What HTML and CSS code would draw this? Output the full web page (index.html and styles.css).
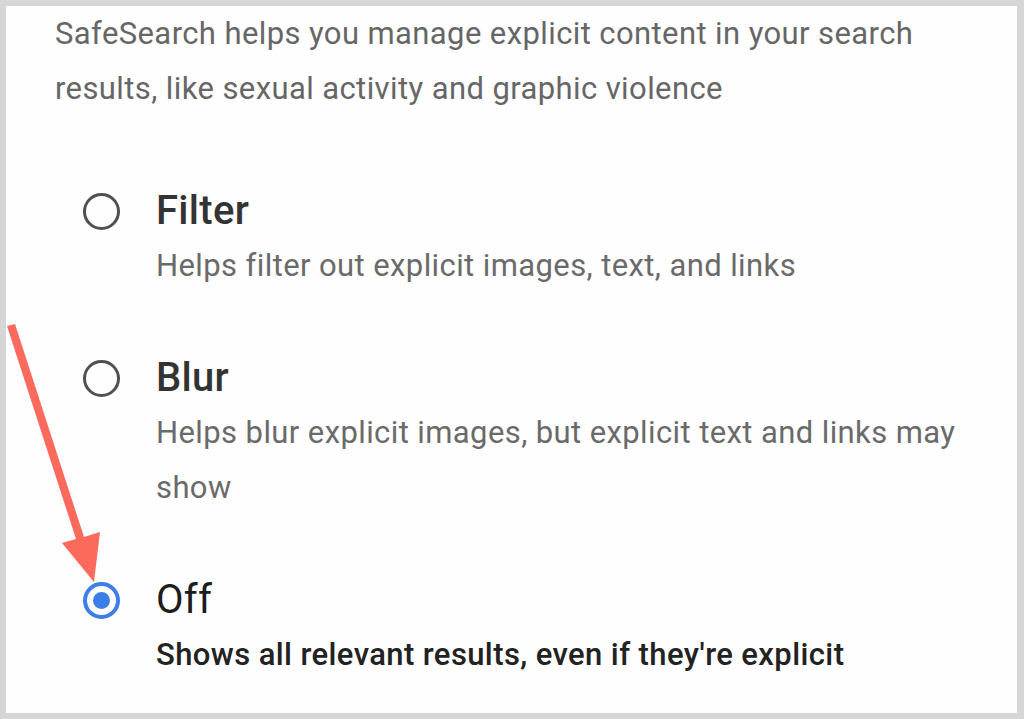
FILE: index.html
```html
<!DOCTYPE html>
<html>
<head>
<meta charset="utf-8">
<link rel="stylesheet" href="styles.css">
</head>
<body>
<div class="frame">
  <p class="intro">SafeSearch helps you manage explicit content in your search results, like sexual activity and graphic violence</p>
  <div class="options">
    <div class="option">
      <span class="radio"></span>
      <div class="text">
        <div class="title">Filter</div>
        <div class="desc">Helps filter out explicit images, text, and links</div>
      </div>
    </div>
    <div class="option">
      <span class="radio"></span>
      <div class="text">
        <div class="title">Blur</div>
        <div class="desc">Helps blur explicit images, but explicit text and links may show</div>
      </div>
    </div>
    <div class="option selected">
      <span class="radio"></span>
      <div class="text">
        <div class="title">Off</div>
        <div class="desc">Shows all relevant results, even if they're explicit</div>
      </div>
    </div>
  </div>
  <svg class="arrow" width="110" height="290" viewBox="0 0 110 290">
    <polygon points="7,26 15,24 84,237 100,232 94,282 62,243 76,239" fill="#fb6a5c"/>
  </svg>
</div>
</body>
</html>
```

FILE: styles.css
```css
html, body {
  margin: 0;
  padding: 0;
  background: #d6d6d6;
}
.frame {
  position: relative;
  box-sizing: border-box;
  width: 1024px;
  height: 719px;
  border-style: solid;
  border-color: #d6d6d6;
  border-width: 6px 7px 6px 6px;
  background: #fefefe;
  padding: 0 30px 0 49px;
  font-family: Roboto, "Noto Sans", sans-serif;
  overflow: hidden;
}
.intro {
  margin: 0;
  font-size: 31px;
  letter-spacing: 0.4px;
  line-height: 55px;
  color: #666666;
  width: 900px;
}
.options {
  margin-top: 68px;
  display: flex;
  flex-direction: column;
  gap: 58px;
}
.option {
  display: flex;
  align-items: flex-start;
}
.radio {
  box-sizing: border-box;
  width: 37px;
  height: 37px;
  border: 3px solid #505050;
  border-radius: 50%;
  margin: 9px 0 0 28px;
  flex: none;
  display: flex;
  align-items: center;
  justify-content: center;
}
.selected .radio {
  border: 4px solid #3d7fe6;
}
.selected .radio::after {
  content: "";
  width: 17px;
  height: 17px;
  border-radius: 50%;
  background: #3a7ee8;
}
.text {
  margin-left: 36px;
  width: 810px;
}
.title {
  font-size: 40px;
  letter-spacing: 0.3px;
  line-height: 54px;
  font-weight: 500;
  color: #333333;
}
.desc {
  font-size: 31px;
  letter-spacing: 0.4px;
  line-height: 55px;
  color: #6a6a6a;
}
.selected .title {
  color: #1c1c1c;
  font-weight: 400;
}
.selected .desc {
  color: #222222;
  font-weight: 500;
}
.arrow {
  position: absolute;
  left: -6px;
  top: 294px;
}
```
